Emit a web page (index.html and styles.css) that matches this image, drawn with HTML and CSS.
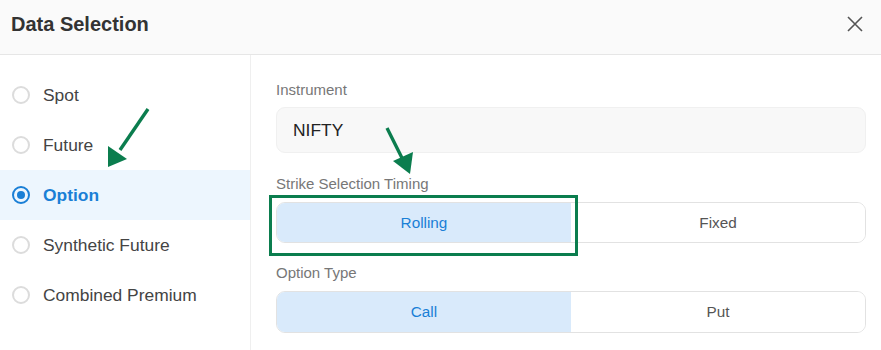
FILE: index.html
```html
<!DOCTYPE html>
<html lang="en">
<head>
    <meta charset="UTF-8">
    <meta name="viewport" content="width=device-width, initial-scale=1.0">
    <title>Data Selection</title>
    <link rel="stylesheet" href="styles.css">
</head>
<body>
    <div class="dialog">
        <div class="dialog-header">
            <h2>Data Selection</h2>
            <button class="close-btn" aria-label="Close">
                <svg width="16" height="16" viewBox="0 0 16 16">
                    <path d="M1 1 L15 15 M15 1 L1 15" stroke="#555" stroke-width="1.6" fill="none"/>
                </svg>
            </button>
        </div>
        <div class="dialog-body">
            <ul class="sidebar">
                <li class="item"><span class="radio"></span>Spot</li>
                <li class="item"><span class="radio"></span>Future</li>
                <li class="item active"><span class="radio"></span>Option</li>
                <li class="item"><span class="radio"></span>Synthetic Future</li>
                <li class="item"><span class="radio"></span>Combined Premium</li>
            </ul>
            <div class="panel">
                <label class="field-label">Instrument</label>
                <div class="input-box">NIFTY</div>

                <label class="field-label">Strike Selection Timing</label>
                <div class="segmented">
                    <button class="seg active">Rolling</button>
                    <button class="seg">Fixed</button>
                </div>

                <label class="field-label">Option Type</label>
                <div class="segmented tall">
                    <button class="seg active">Call</button>
                    <button class="seg">Put</button>
                </div>
            </div>
        </div>

        <!-- annotation marks drawn over the screenshot -->
        <svg class="annotations" width="881" height="350" viewBox="0 0 881 350">
            <g fill="#0b7d4e" stroke="#0b7d4e">
                <line x1="148" y1="109" x2="120" y2="150" stroke-width="3.4"/>
                <polygon points="108,167 108,146 127,159" stroke="none"/>
                <line x1="387" y1="128" x2="402" y2="158" stroke-width="3.4"/>
                <polygon points="410,174 393,161 413,152" stroke="none"/>
            </g>
            <rect x="270.5" y="196.5" width="306" height="58" fill="none" stroke="#0b7d4e" stroke-width="3"/>
        </svg>
    </div>
</body>
</html>
```

FILE: styles.css
```css
body {
    font-family: "Liberation Sans", Arial, sans-serif;
    background-color: #fff;
    margin: 0;
    padding: 0;
}
.dialog {
    position: relative;
    width: 881px;
    height: 350px;
    overflow: hidden;
}
.dialog-header {
    height: 54px;
    background-color: #fafafa;
    border-bottom: 1px solid #e6e6e6;
    display: flex;
    align-items: center;
    justify-content: space-between;
    padding: 0 18px 0 11px;
}
.dialog-header h2 {
    margin: 0;
    font-size: 20px;
    font-weight: bold;
    color: #333;
    position: relative;
    top: -3px;
}
.close-btn {
    background: none;
    border: none;
    padding: 0;
    width: 16px;
    height: 16px;
    display: flex;
    position: relative;
    top: -3px;
}
.dialog-body {
    display: flex;
    height: 295px;
}
.sidebar {
    list-style: none;
    margin: 0;
    padding: 15px 0 0;
    width: 250px;
    border-right: 1px solid #efefef;
}
.item {
    height: 50px;
    display: flex;
    align-items: center;
    gap: 13px;
    padding-left: 12px;
    font-size: 17.4px;
    color: #444;
}
.radio {
    width: 18px;
    height: 18px;
    border: 2px solid #dcdcdc;
    border-radius: 50%;
    box-sizing: border-box;
    position: relative;
    flex-shrink: 0;
}
.item.active {
    background-color: #edf6fe;
    color: #1a7fd6;
    font-weight: bold;
}
.item.active .radio {
    border-color: #1a7fd6;
}
.item.active .radio::after {
    content: "";
    position: absolute;
    left: 3px;
    top: 3px;
    width: 8px;
    height: 8px;
    border-radius: 50%;
    background-color: #1a7fd6;
}
.panel {
    flex: 1;
    padding: 25px 15px 0 25px;
    display: flex;
    flex-direction: column;
}
.panel > * {
    flex-shrink: 0;
}
.field-label {
    font-size: 15px;
    line-height: 20px;
    color: #777;
    margin-bottom: 8px;
}
.input-box {
    height: 46px;
    box-sizing: border-box;
    background-color: #f8f8f8;
    border: 1px solid #f0f0f0;
    border-radius: 9px;
    display: flex;
    align-items: center;
    padding-left: 16px;
    font-size: 17.4px;
    color: #222;
    margin-bottom: 21px;
    margin-top: -1px;
}
.segmented {
    display: flex;
    height: 41px;
    box-sizing: border-box;
    border: 1px solid #e2e2e2;
    border-radius: 9px;
    overflow: hidden;
    margin-bottom: 20px;
}
.segmented.tall {
    height: 42px;
    margin-bottom: 0;
}
.seg {
    flex: 1;
    border: none;
    background: #fff;
    font-family: inherit;
    font-size: 15.3px;
    color: #555;
    padding: 0;
}
.seg.active {
    background-color: #d9eafb;
    color: #1a7fd6;
}
.annotations {
    position: absolute;
    left: 0;
    top: 0;
    pointer-events: none;
}
```
